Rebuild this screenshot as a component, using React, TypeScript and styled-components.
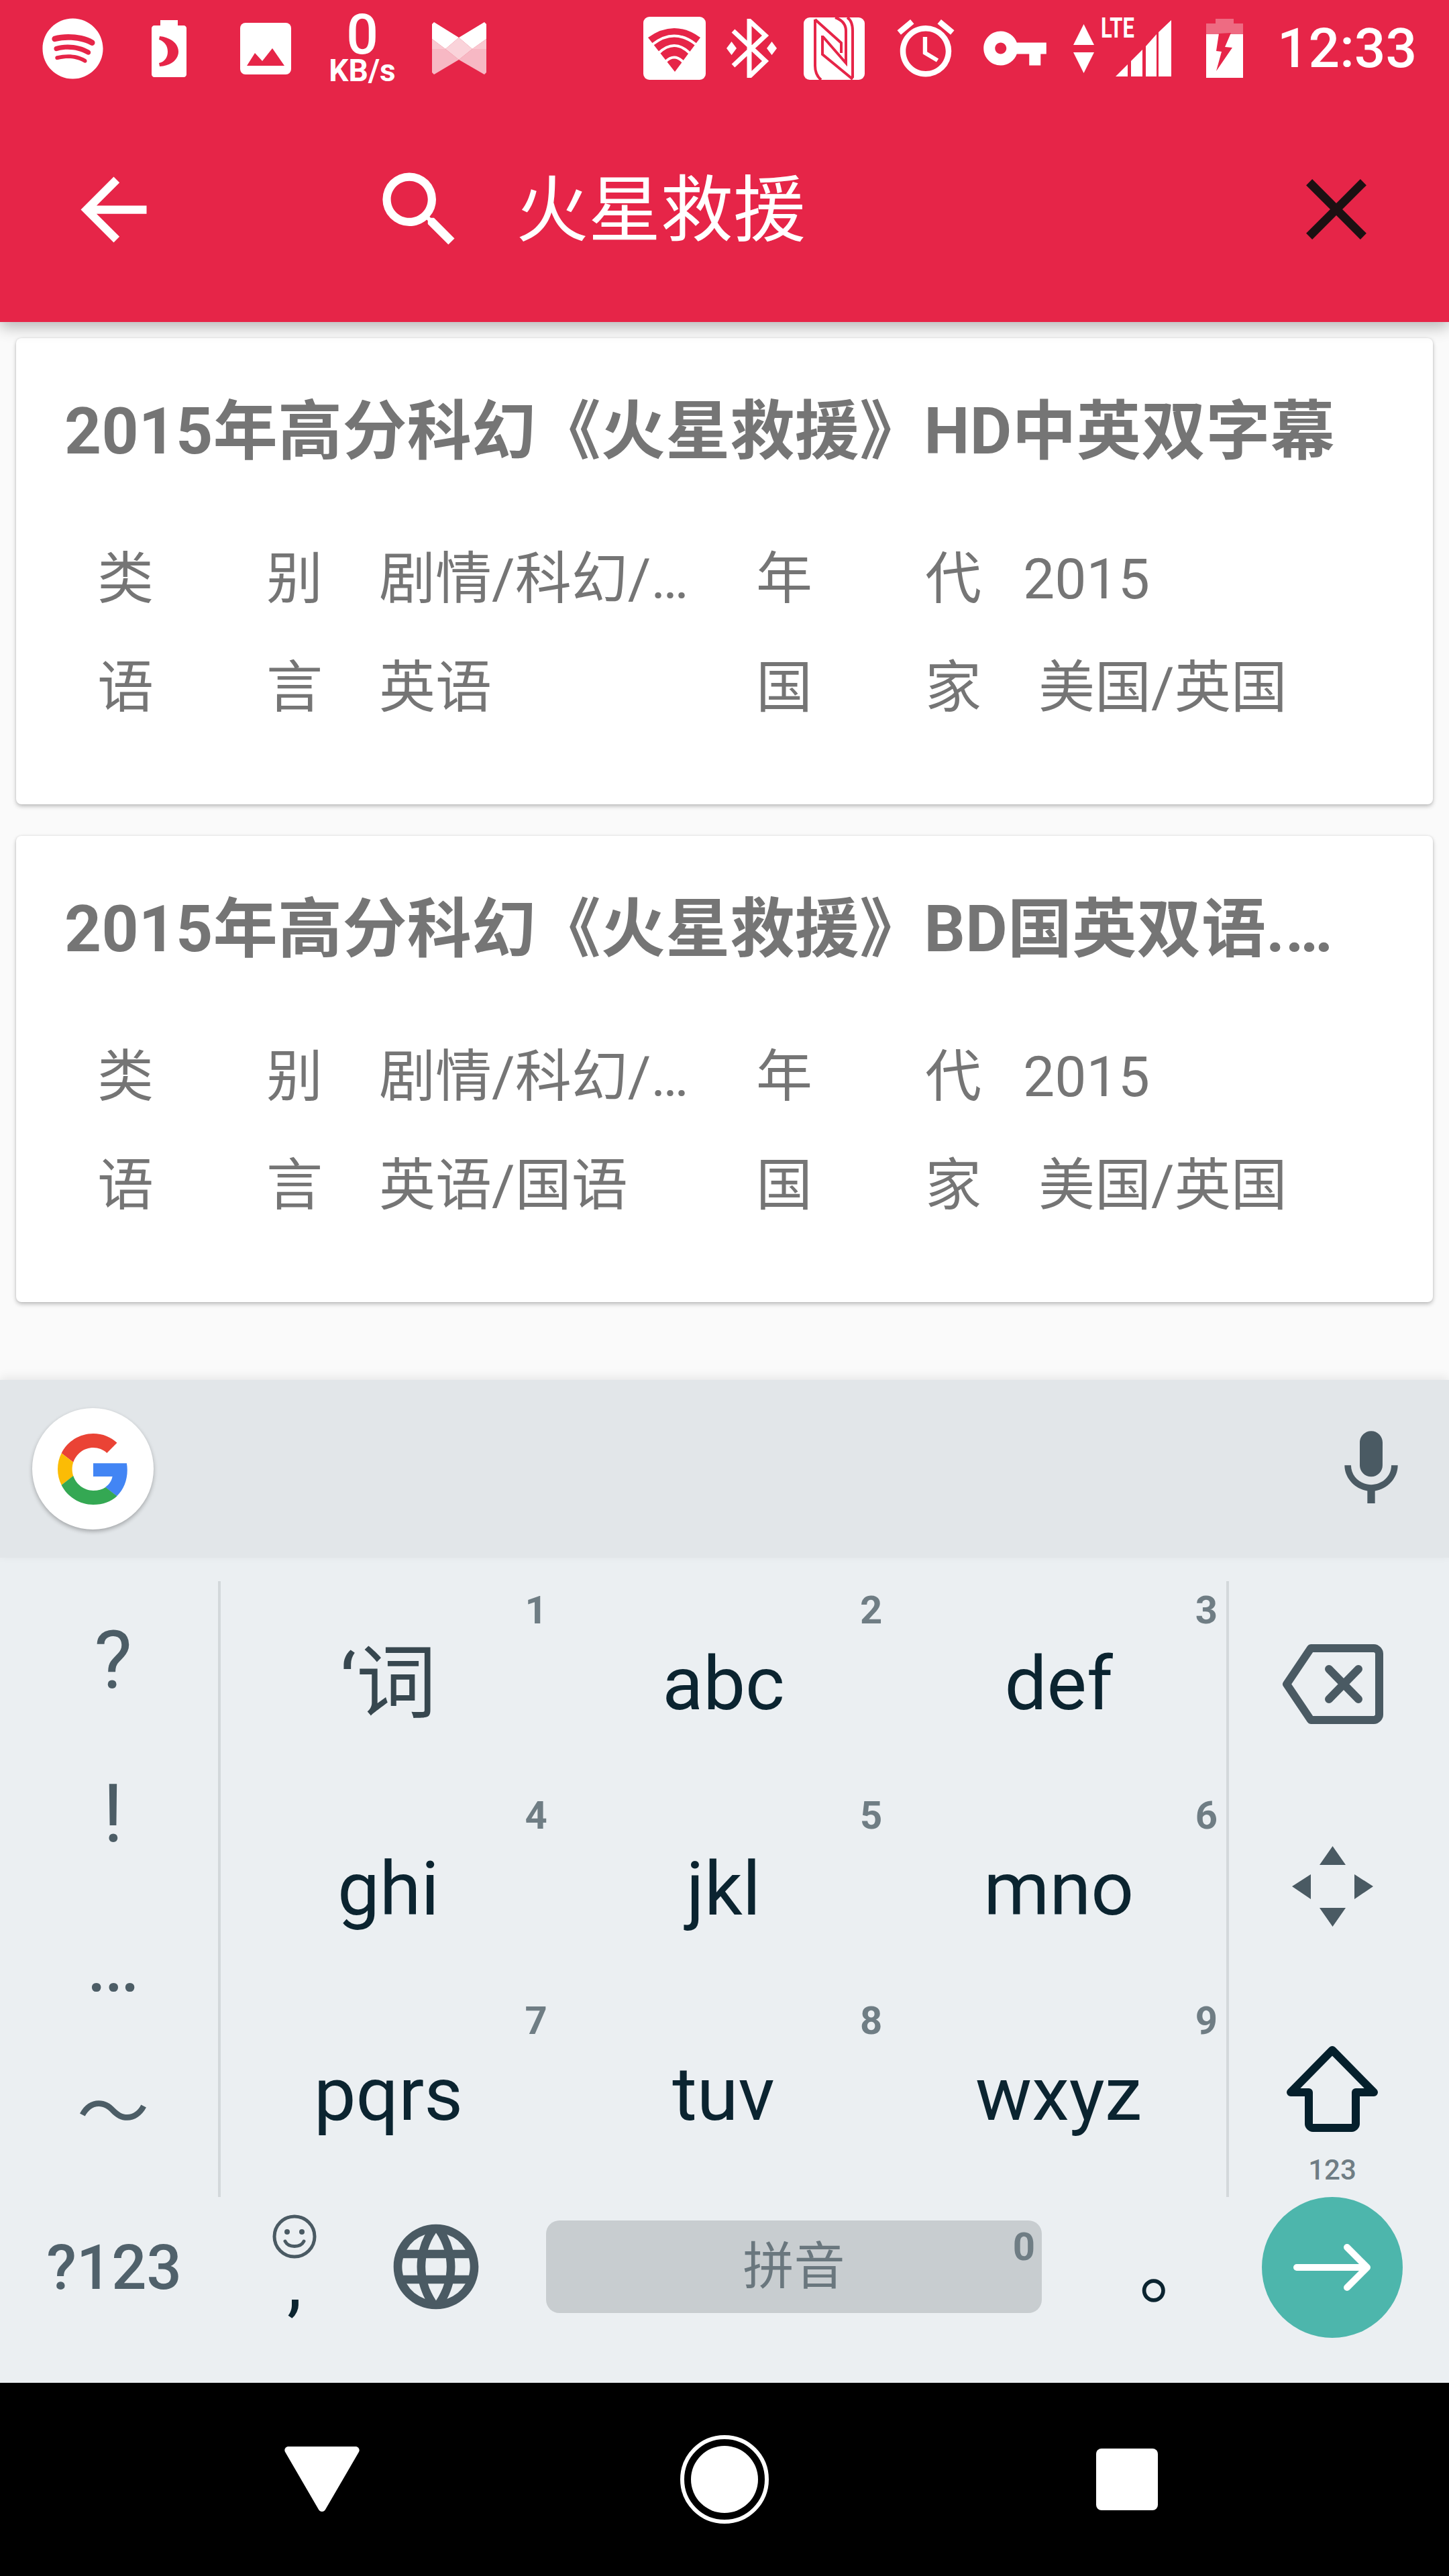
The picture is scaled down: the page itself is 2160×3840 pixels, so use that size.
import React from 'react';
import styled, { createGlobalStyle } from 'styled-components';
import { FaSpotify } from 'react-icons/fa';
import { MdAccessAlarm, MdArrowBack, MdClose, MdLanguage, MdMic, MdSearch, MdVpnKey } from 'react-icons/md';

const GlobalStyle = createGlobalStyle`
  html, body {
    margin: 0;
    padding: 0;
    background: #fafafa;
  }
  * {
    box-sizing: border-box;
  }
`;

const RED = '#e62548';
const SANS = 'Roboto, "Noto Sans CJK SC", sans-serif';

const Page = styled.div`
  width: 2160px;
  height: 3840px;
  display: flex;
  flex-direction: column;
  overflow: hidden;
  background: #fafafa;
  font-family: ${SANS};
`;

const Header = styled.header`
  height: 480px;
  flex: none;
  background: ${RED};
  box-shadow: 0 6px 22px rgba(0, 0, 0, 0.3);
  position: relative;
  z-index: 2;
`;

const StatusBar = styled.div`
  height: 144px;
  display: flex;
  align-items: center;
  padding: 0 48px 0 36px;
  color: #fff;
`;

const StatusSlot = styled.div`
  width: 144px;
  display: flex;
  align-items: center;
  justify-content: center;
`;

const StatusRight = styled.div`
  margin-left: auto;
  display: flex;
  align-items: center;
`;

const StatusIcon = styled.div<{ $gap?: number; $w: number }>`
  width: ${(p) => p.$w}px;
  margin-left: ${(p) => p.$gap ?? 0}px;
  display: flex;
  justify-content: center;
  align-items: center;
  flex: none;

  svg {
    flex: none;
  }
`;

const Speed = styled.div`
  display: flex;
  flex-direction: column;
  align-items: center;
  font-weight: 700;
  margin-top: 4px;
`;

const SpeedValue = styled.span`
  font-size: 84px;
  line-height: 62px;
  font-weight: 500;
`;

const SpeedUnit = styled.span`
  font-size: 46px;
  line-height: 44px;
`;

const SignalBox = styled.div`
  position: relative;
  width: 105px;
  height: 88px;
  margin-left: 10px;
`;

const LteLabel = styled.span`
  position: absolute;
  left: 0;
  top: -8px;
  font-size: 43px;
  line-height: 43px;
  font-weight: 700;
  transform: scaleX(0.72);
  transform-origin: left center;
`;

const SignalBars = styled.svg`
  position: absolute;
  right: 0;
  top: 2px;
`;

const Clock = styled.span`
  margin-left: 51px;
  font-size: 82px;
  line-height: 1;
  font-weight: 500;
`;

const Toolbar = styled.div`
  height: 336px;
  display: flex;
  align-items: center;
  padding: 0 91px 0 96px;
  color: #fff;
`;

const SearchField = styled.div`
  flex: 1;
  display: flex;
  align-items: center;
  margin-left: 309px;
`;

const QueryText = styled.span`
  margin: 4px 0 0 70px;
  font-size: 108px;
  line-height: 1;
`;

const CloseButton = styled.div`
  color: #1c1012;
  display: flex;
`;

const Results = styled.main`
  flex: 1;
  display: flex;
  flex-direction: column;
  gap: 47px;
  padding: 24px 24px 0;
`;

const Card = styled.article`
  height: 695px;
  background: #fff;
  border-radius: 8px;
  box-shadow: 0 3px 6px rgba(0, 0, 0, 0.24), 0 0 3px rgba(0, 0, 0, 0.1);
  padding: 79px 50px 0 72px;
  color: #757575;
`;

const CardTitle = styled.h2`
  margin: 0 0 80px;
  font-size: 96px;
  line-height: 120px;
  font-weight: 700;
  letter-spacing: 0.35px;
  white-space: nowrap;
`;

const DetailRow = styled.div`
  height: 162px;
  display: grid;
  grid-template-columns: 982px 1fr;
  padding-left: 49px;
  align-items: center;
  font-size: 84px;
  line-height: 1;
  white-space: nowrap;
`;

const Detail = styled.div`
  display: flex;
  align-items: center;
`;

const DetailLabel = styled.span`
  width: 336px;
  display: flex;
  justify-content: space-between;
`;

const DetailValue = styled.span<{ $gap: number }>`
  margin-left: ${(p) => p.$gap}px;
`;

const SuggestionStrip = styled.div`
  height: 265px;
  flex: none;
  background: #e2e6e9;
  display: flex;
  align-items: center;
  justify-content: space-between;
  padding: 0 48px 0 48px;
  box-shadow: 0 -4px 14px rgba(0, 0, 0, 0.08);
  color: #4a5a63;
  position: relative;
`;

const GoogleBadge = styled.div`
  width: 181px;
  height: 181px;
  border-radius: 50%;
  background: #fff;
  box-shadow: 0 3px 6px rgba(0, 0, 0, 0.28);
  display: flex;
  align-items: center;
  justify-content: center;
`;

const Keyboard = styled.div`
  height: 1230px;
  flex: none;
  background: #ebeff2;
  padding-top: 35px;
  display: flex;
  flex-direction: column;
`;

const KeyArea = styled.div`
  height: 918px;
  display: grid;
  grid-template-columns: 329px 1fr 332px;
`;

const SymbolColumn = styled.div`
  display: grid;
  grid-template-rows: repeat(4, 1fr);
  justify-items: center;
  align-items: center;
  padding-left: 12px;
  padding-top: 4px;
  border-right: 4px solid #d3d8db;
  margin-bottom: 14px;
  color: #4c5d66;
  font-size: 120px;
  line-height: 1;
`;

const TileSymbol = styled.span`
  font-size: 108px;
  margin-top: -22px;
`;

const Ellipsis = styled.span`
  margin-top: -10px;
`;

const LetterGrid = styled.div`
  display: grid;
  grid-template-columns: repeat(3, 1fr);
  grid-template-rows: repeat(3, 306px);
`;

const LetterKey = styled.div<{ $soft?: boolean }>`
  position: relative;
  display: flex;
  align-items: center;
  justify-content: center;
  font-size: ${(p) => (p.$soft ? 120 : 112)}px;
  line-height: 1;
  color: ${(p) => (p.$soft ? '#37474f' : '#0b2430')};
`;

const KeyHint = styled.span`
  position: absolute;
  right: 13px;
  top: 12px;
  font-size: 58px;
  line-height: 1.1;
  font-weight: 700;
  color: #6f7d84;
`;

const ActionColumn = styled.div`
  border-left: 4px solid #d3d8db;
  margin-bottom: 14px;
  display: grid;
  grid-template-rows: repeat(3, 306px);
  justify-items: center;
  align-items: center;
  padding-right: 20px;
`;

const MoveSlot = styled.div`
  display: flex;
  margin-top: -8px;
`;

const ShiftKey = styled.div`
  display: flex;
  flex-direction: column;
  align-items: center;
  gap: 36px;
  margin-top: 62px;
  font-size: 42px;
  line-height: 1;
  font-weight: 500;
  color: #6f7d84;
`;

const BottomRow = styled.div`
  flex: 1;
  display: flex;
  align-items: flex-start;
  padding-top: 35px;
`;

const BottomKey = styled.div<{ $w: number }>`
  width: ${(p) => p.$w}px;
  height: 138px;
  flex: none;
  display: flex;
  align-items: center;
  justify-content: center;
`;

const ModeLabel = styled.span`
  font-size: 92px;
  line-height: 1;
  margin-top: 3px;
  color: #50616b;
  font-weight: 500;
`;

const EmojiKey = styled.div`
  display: flex;
  flex-direction: column;
  align-items: center;
  margin-top: -6px;
`;

const Comma = styled.span`
  font-size: 112px;
  line-height: 70px;
  height: 84px;
  color: #0b2430;
`;

const GlobeIcon = styled(MdLanguage)`
  color: #4a5a63;
`;

const SpaceBar = styled.div`
  position: relative;
  width: 739px;
  height: 138px;
  margin-left: 52px;
  flex: none;
  border-radius: 20px;
  background: #c8cdd0;
  display: flex;
  align-items: center;
  justify-content: center;
  color: #6a777e;
  font-size: 76px;
  line-height: 1;
`;

const SpaceHint = styled.span`
  position: absolute;
  right: 10px;
  top: 8px;
  font-size: 58px;
  line-height: 1.1;
  font-weight: 700;
  color: #6f7d84;
`;

const PeriodGlyph = styled.span`
  font-size: 112px;
  line-height: 1;
  color: #0b2430;
  margin: 16px 0 0 74px;
`;

const EnterButton = styled.div`
  width: 210px;
  height: 210px;
  margin-top: -35px;
  flex: none;
  border-radius: 50%;
  background: #4db6ac;
  display: flex;
  align-items: center;
  justify-content: center;
`;

const NavBar = styled.nav`
  height: 288px;
  flex: none;
  background: #000;
  display: grid;
  grid-template-columns: repeat(3, 600px);
  padding: 0 180px;
  justify-items: center;
  align-items: center;
`;

const ICON_RED = RED;

const BatterySaverIcon = () => (
  <svg width="52" height="85" viewBox="0 0 52 85">
    <path d="M13 0h26v8h9c2 0 4 2 4 4v69c0 2-2 4-4 4H4c-2 0-4-2-4-4V12c0-2 2-4 4-4h9z" fill="#fff" />
    <path d="M12 24c18 2 28 12 28 23s-10 21-28 22l-1-5c9-2 13-9 13-17s-4-15-13-18z" fill={ICON_RED} />
  </svg>
);

const PictureIcon = () => (
  <svg width="76" height="77" viewBox="0 0 76 77">
    <rect width="76" height="77" rx="8" fill="#fff" />
    <path d="M10 64l12-19 11 12 15-19 18 26z" fill={ICON_RED} />
  </svg>
);

const MaskIcon = () => (
  <svg width="81" height="78" viewBox="0 0 81 78">
    <polygon points="0,40 20,40 40,56 3,78 0,75" fill="#fff" fillOpacity="0.68" />
    <polygon points="81,40 60,40 40,56 78,78 81,75" fill="#fff" fillOpacity="0.68" />
    <polygon points="0,25 20,40 0,40" fill="#fff" fillOpacity="0.75" />
    <polygon points="81,25 60,40 81,40" fill="#fff" fillOpacity="0.75" />
    <polygon points="0,3 3,0 40,23 20,40 0,25" fill="#fff" />
    <polygon points="81,3 78,0 40,23 60,40 81,25" fill="#fff" />
    <polygon points="40,23 60,40 40,56 20,40" fill="#fff" fillOpacity="0.8" />
  </svg>
);

const WifiBoxIcon = () => (
  <svg width="93" height="94" viewBox="0 0 93 94">
    <rect width="93" height="94" rx="9" fill="#fff" />
    <path d="M7 31Q46 3 85 31L47 82z" fill={ICON_RED} />
    <g fill="none" stroke="#fff" strokeWidth="4">
      <path d="M14 41Q46 16 78 41" />
      <path d="M23 54Q46 32 69 54" />
      <path d="M33 67Q46 54 59 67" />
    </g>
  </svg>
);

const BluetoothIcon = () => (
  <svg width="76" height="88" viewBox="0 0 76 88">
    <path d="M10 18l48 45-24 23V3l24 22-48 45" fill="none" stroke="#fff" strokeWidth="7" />
    <path d="M7.500 34l7.500 10-7.500 10L0 44zM67.500 34l7.500 10-7.500 10L60 44z" fill="#fff" />
  </svg>
);

const NfcIcon = () => (
  <svg width="91" height="93" viewBox="0 0 91 93">
    <rect width="91" height="93" rx="9" fill="#fff" />
    <g fill="none" stroke={ICON_RED} strokeWidth="4">
      <path d="M47 0c11 4 16 10 16 20v48L29 29" />
      <path d="M17 3l39 35v15" />
      <path d="M28 27v28l45 37" />
      <path d="M65 0c6 4 8 10 8 20v70" />
      <path d="M17 3v69c0 8 3 16 9 21" />
    </g>
  </svg>
);

const DataArrowsIcon = () => (
  <svg width="31" height="73" viewBox="0 0 31 73">
    <path d="M15.500 0L31 31H0zM0 42h31L15.500 73z" fill="#fff" />
  </svg>
);

const SignalIcon = () => (
  <SignalBars width="83" height="84" viewBox="0 0 83 84">
    <path d="M0 84L18 66v18zM23 61l17-17v40H23zM45 39l16-18v63H45zM64 18L83 0v84H64z" fill="#fff" />
  </SignalBars>
);

const ChargingBatteryIcon = () => (
  <svg width="55" height="88" viewBox="0 0 55 88">
    <path d="M14 0h27v7h14v16H0V7h14z" fill="#fff" fillOpacity="0.32" />
    <path d="M0 23h55v65H0z" fill="#fff" />
    <path d="M19 22l-4 26 8 1-8 29 24-35-11-1 9-21z" fill={ICON_RED} />
  </svg>
);

const GoogleLogo = () => (
  <svg width="106" height="106" viewBox="0 0 48 48">
    <path fill="#EA4335" d="M24 9.500c3.540 0 6.710 1.220 9.210 3.600l6.850-6.850C35.900 2.380 30.470 0 24 0 14.620 0 6.510 5.380 2.560 13.220l7.980 6.190C12.430 13.720 17.740 9.500 24 9.500z" />
    <path fill="#4285F4" d="M46.980 24.550c0-1.570-.15-3.090-.38-4.550H24v9.020h12.940c-.58 2.960-2.260 5.480-4.780 7.180l7.730 6c4.510-4.180 7.090-10.360 7.090-17.650z" />
    <path fill="#FBBC05" d="M10.530 28.590c-.48-1.450-.76-2.990-.76-4.590s.27-3.140.76-4.590l-7.980-6.190C.92 16.460 0 20.120 0 24c0 3.880.92 7.540 2.560 10.780l7.970-6.190z" />
    <path fill="#34A853" d="M24 48c6.480 0 11.930-2.130 16.030-5.810l-7.730-6c-2.150 1.450-4.920 2.300-8.300 2.300-6.260 0-11.570-4.220-13.470-9.910l-7.980 6.190C6.510 42.620 14.620 48 24 48z" />
  </svg>
);

const BackspaceIcon = () => (
  <svg width="152" height="119" viewBox="0 0 152 119">
    <path d="M44 6h94c4 0 8 4 8 8v91c0 4-4 8-8 8H44L8 59.500z" fill="none" stroke="#4a5a63" strokeWidth="12" strokeLinejoin="round" />
    <path d="M62 37l44 45M106 37L62 82" fill="none" stroke="#4a5a63" strokeWidth="12" strokeLinecap="round" transform="translate(9 0)" />
  </svg>
);

const MoveIcon = () => (
  <svg width="121" height="120" viewBox="0 0 121 120">
    <path d="M60.500 0L80 28H41zM0 60l28-18v37zM121 60L93 42v37zM60.500 120L41 92h39z" fill="#4a5a63" />
  </svg>
);

const ShiftIcon = () => (
  <svg width="136" height="128" viewBox="0 0 136 128">
    <path
      d="M68 6L6 69h27v47c0 3 3 6 6 6h58c3 0 6-3 6-6V69h27z"
      fill="none"
      stroke="#05202c"
      strokeWidth="12"
      strokeLinejoin="round"
    />
  </svg>
);

const SmileIcon = () => (
  <svg width="66" height="66" viewBox="0 0 66 66" fill="none" stroke="#4a5a63" strokeWidth="5">
    <circle cx="33" cy="33" r="30" />
    <circle cx="22" cy="26" r="4" fill="#4a5a63" stroke="none" />
    <circle cx="44" cy="26" r="4" fill="#4a5a63" stroke="none" />
    <path d="M19 40c5 10 23 10 28 0" strokeLinecap="round" />
  </svg>
);

const EnterArrow = () => (
  <svg width="116" height="72" viewBox="0 0 116 72" fill="none" stroke="#fff" strokeWidth="10" strokeLinecap="round" strokeLinejoin="round">
    <path d="M5 36h104M80 6l30 30-30 30" />
  </svg>
);

const BackTriangle = () => (
  <svg width="112" height="98" viewBox="0 0 112 98">
    <path d="M6 0h100c4 0 7 4 5 8L61 94c-2 4-8 4-10 0L1 8c-2-4 1-8 5-8z" fill="#fff" />
  </svg>
);

const HomeRing = () => (
  <svg width="134" height="134" viewBox="0 0 134 134">
    <circle cx="67" cy="67" r="63" fill="none" stroke="#fff" strokeWidth="6" />
    <circle cx="67" cy="67" r="50" fill="#fff" />
  </svg>
);

const RecentsSquare = styled.div`
  width: 92px;
  height: 92px;
  border-radius: 8px;
  background: #fff;
`;

type Row = { label: [string, string]; value: string; gap: number };

const ResultCard = ({ title, rows }: { title: string; rows: [Row, Row][] }) => (
  <Card>
    <CardTitle>{title}</CardTitle>
    {rows.map((cells) => (
      <DetailRow key={cells[0].label.join('')}>
        {cells.map((cell) => (
          <Detail key={cell.label.join('')}>
            <DetailLabel>
              <span>{cell.label[0]}</span>
              <span>{cell.label[1]}</span>
            </DetailLabel>
            <DetailValue $gap={cell.gap}>{cell.value}</DetailValue>
          </Detail>
        ))}
      </DetailRow>
    ))}
  </Card>
);

const detailRows = (language: string): [Row, Row][] => [
  [
    { label: ['类', '别'], value: '剧情/科幻/…', gap: 84 },
    { label: ['年', '代'], value: '2015', gap: 62 },
  ],
  [
    { label: ['语', '言'], value: language, gap: 84 },
    { label: ['国', '家'], value: '美国/英国', gap: 85 },
  ],
];

const keys = [
  { text: '‘词', hint: '1', soft: true },
  { text: 'abc', hint: '2' },
  { text: 'def', hint: '3' },
  { text: 'ghi', hint: '4' },
  { text: 'jkl', hint: '5' },
  { text: 'mno', hint: '6' },
  { text: 'pqrs', hint: '7' },
  { text: 'tuv', hint: '8' },
  { text: 'wxyz', hint: '9' },
];

const App = () => (
  <Page>
    <GlobalStyle />
    <Header>
      <StatusBar>
        <StatusSlot>
          <FaSpotify size={93} />
        </StatusSlot>
        <StatusSlot>
          <BatterySaverIcon />
        </StatusSlot>
        <StatusSlot>
          <PictureIcon />
        </StatusSlot>
        <StatusSlot>
          <Speed>
            <SpeedValue>0</SpeedValue>
            <SpeedUnit>KB/s</SpeedUnit>
          </Speed>
        </StatusSlot>
        <StatusSlot>
          <MaskIcon />
        </StatusSlot>
        <StatusRight>
          <StatusIcon $w={93}>
            <WifiBoxIcon />
          </StatusIcon>
          <StatusIcon $w={76} $gap={31}>
            <BluetoothIcon />
          </StatusIcon>
          <StatusIcon $w={91} $gap={39}>
            <NfcIcon />
          </StatusIcon>
          <StatusIcon $w={84} $gap={49}>
            <MdAccessAlarm size={102} />
          </StatusIcon>
          <StatusIcon $w={94} $gap={44}>
            <MdVpnKey size={102} />
          </StatusIcon>
          <StatusIcon $w={31} $gap={40}>
            <DataArrowsIcon />
          </StatusIcon>
          <SignalBox>
            <LteLabel>LTE</LteLabel>
            <SignalIcon />
          </SignalBox>
          <StatusIcon $w={55} $gap={52}>
            <ChargingBatteryIcon />
          </StatusIcon>
          <Clock>12:33</Clock>
        </StatusRight>
      </StatusBar>
      <Toolbar>
        <MdArrowBack size={147} />
        <SearchField>
          <MdSearch size={147} />
          <QueryText>火星救援</QueryText>
        </SearchField>
        <CloseButton>
          <MdClose size={154} />
        </CloseButton>
      </Toolbar>
    </Header>
    <Results>
      <ResultCard title="2015年高分科幻《火星救援》HD中英双字幕" rows={detailRows('英语')} />
      <ResultCard title="2015年高分科幻《火星救援》BD国英双语.…" rows={detailRows('英语/国语')} />
    </Results>
    <SuggestionStrip>
      <GoogleBadge>
        <GoogleLogo />
      </GoogleBadge>
      <MdMic size={136} />
    </SuggestionStrip>
    <Keyboard>
      <KeyArea>
        <SymbolColumn>
          <span>?</span>
          <span>!</span>
          <Ellipsis>…</Ellipsis>
          <TileSymbol>～</TileSymbol>
        </SymbolColumn>
        <LetterGrid>
          {keys.map((key) => (
            <LetterKey key={key.hint} $soft={key.soft}>
              {key.text}
              <KeyHint>{key.hint}</KeyHint>
            </LetterKey>
          ))}
        </LetterGrid>
        <ActionColumn>
          <BackspaceIcon />
          <MoveSlot>
            <MoveIcon />
          </MoveSlot>
          <ShiftKey>
            <ShiftIcon />
            123
          </ShiftKey>
        </ActionColumn>
      </KeyArea>
      <BottomRow>
        <BottomKey $w={340}>
          <ModeLabel>?123</ModeLabel>
        </BottomKey>
        <BottomKey $w={198}>
          <EmojiKey>
            <SmileIcon />
            <Comma>,</Comma>
          </EmojiKey>
        </BottomKey>
        <BottomKey $w={224}>
          <GlobeIcon size={152} />
        </BottomKey>
        <SpaceBar>
          拼音
          <SpaceHint>0</SpaceHint>
        </SpaceBar>
        <BottomKey $w={328}>
          <PeriodGlyph>。</PeriodGlyph>
        </BottomKey>
        <EnterButton>
          <EnterArrow />
        </EnterButton>
      </BottomRow>
    </Keyboard>
    <NavBar>
      <BackTriangle />
      <HomeRing />
      <RecentsSquare />
    </NavBar>
  </Page>
);

export default App;
